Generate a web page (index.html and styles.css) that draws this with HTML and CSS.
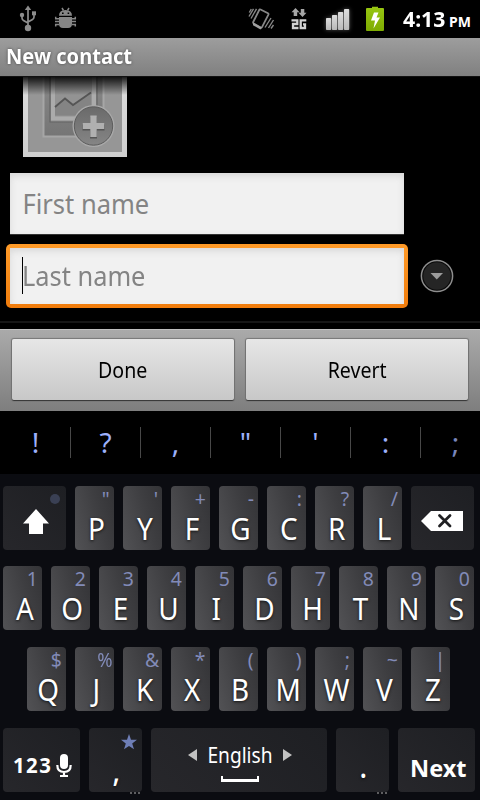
FILE: index.html
```html
<!DOCTYPE html>
<html lang="en">
<head>
<meta charset="utf-8">
<title>New contact</title>
<link rel="stylesheet" href="styles.css">
</head>
<body>
<div class="phone">
  <header class="status">
    <svg class="usb" width="20" height="28" viewBox="18 4 20 28"><g fill="none" stroke="#8c8c8c" stroke-width="1.700"><path d="M28 10v16M22 16v2q0 1.500 1.500 2.400l4.500 2.600M34 14v3q0 1.500-1.500 2.400l-4.500 2.600"/></g><g fill="#8c8c8c"><path d="M28 5.500l3.200 4.500h-6.400z"/><circle cx="22" cy="15" r="2.200"/><path d="M32 11.300h4v4h-4z"/><circle cx="28" cy="28" r="3.200"/></g></svg>
    <svg class="bug" width="24" height="28" viewBox="54 4 24 28"><g fill="#868686"><path d="M59 15.700q0-5.500 6.400-5.700 6.600.2 6.600 5.700zM59 17h13v7q0 4-4 4h-5q-4 0-4-4z"/></g><path d="M62 8l1.500 2.500M69 8l-1.500 2.500M59 18.700h-3.300v-2M59 21.500h-4M59 24.500h-3.300v2M72 18.700h3.300v-2M72 21.500h4M72 24.500h3.300v2" fill="none" stroke="#868686" stroke-width="1.500"/><path d="M62 12.500h1.600v1.600H62zM67.600 12.500h1.600v1.600h-1.600z" fill="#000"/></svg>
    <svg class="vibrate" width="28" height="28" viewBox="247 4 28 28"><g fill="none" stroke="#878787"><path d="M260.500 9.500l7.500 3.800q.8.500.4 1.400l-6.400 12.400q-.5.900-1.400.5l-7-4.200q-.8-.5-.4-1.400l6-12q.4-.9 1.300-.5z" stroke-width="1.800"/><path d="M249 16.500l4.500-7.700M251 18.500l5.500-9.700M249.300 12.500l2-3.500M265 27.500l6-9.500M268.500 28l5-8M271 28.500l2.500-3.500" stroke-width="1.400"/></g><path d="M253 22.500l9 5-1.500 2-7.500-4.300z" fill="#a0a0a0"/></svg>
    <svg class="data" width="18" height="28" viewBox="290 4 18 28"><path d="M295.500 8l4 4.300h-2.300V16h-3.500v-3.700h-2.200zM302.500 17l-4-4.300h2.300V9h3.500v3.700h2.200z" fill="#a6a6a6"/><path d="M291.500 20.300h5.800v3.700h-4.300v4h5.500M306.300 20.300h-5.600V28h4.300v-3.700h-2" fill="none" stroke="#d2d2d2" stroke-width="2.300"/></svg>
    <svg class="signal" width="26" height="28" viewBox="325 4 26 28"><defs><linearGradient id="sg" x1="0" y1="0" x2="0" y2="1"><stop offset="0" stop-color="#ddd"/><stop offset="1" stop-color="#b9b9b9"/></linearGradient></defs><g fill="url(#sg)"><rect x="326" y="18" width="5.200" height="12" rx=".8"/><rect x="332" y="15" width="5.200" height="15" rx=".8"/><rect x="338" y="12" width="5.200" height="18" rx=".8"/><rect x="344" y="9" width="5.200" height="21" rx=".8"/></g></svg>
    <svg class="battery" width="20" height="28" viewBox="365 4 20 28"><defs><linearGradient id="bg" x1="0" y1="0" x2="0" y2="1"><stop offset="0" stop-color="#98c712"/><stop offset="1" stop-color="#7eab02"/></linearGradient></defs><path d="M372 8V6.800h6V8h5q1 0 1 1v21q0 1-1 1h-16q-1 0-1-1V9q0-1 1-1z" fill="url(#bg)"/><path d="M374 12.500h4.500l-2 5h3.500l-6.500 11 1.500-8h-4z" fill="#fff"/></svg>
    <div class="clock"><span class="time">4:13</span><span class="ampm">PM</span></div>
  </header>
  <div class="titlebar"><h1>New contact</h1></div>
  <main class="form">
    <svg class="photo" width="104" height="80" viewBox="23 77 104 80">
      <defs>
        <linearGradient id="fade" x1="0" y1="0" x2="0" y2="1"><stop offset="0" stop-color="#000" stop-opacity=".88"/><stop offset="1" stop-color="#000" stop-opacity="0"/></linearGradient>
        <linearGradient id="frame" x1="0" y1="0" x2="0" y2="1"><stop offset="0" stop-color="#ddd"/><stop offset="1" stop-color="#cfcfcf"/></linearGradient>
        <linearGradient id="card" x1="0" y1="0" x2="0" y2="1"><stop offset="0" stop-color="#8b8b8b"/><stop offset="1" stop-color="#757575"/></linearGradient>
        <linearGradient id="disc" x1="0" y1="0" x2="0" y2="1"><stop offset="0" stop-color="#6a6a6a"/><stop offset="1" stop-color="#858585"/></linearGradient>
      </defs>
      <path d="M23 77h104v80H23z" fill="url(#frame)"/><path d="M28 77h94v75H28z" fill="#969696"/>
      <path d="M43.500 70h60v66.500h-60z" fill="url(#card)" stroke="#a6a6a6" stroke-width="2"/>
      <path d="M50 70h47v52H50z" fill="#8c8c8c" stroke="#646464" stroke-width="1.200"/>
      <path d="M53 70h41v48.500H53z" fill="#939393" stroke="#ababab" stroke-width="4"/>
      <path d="M55 107l10-8.500 8 6.500 18-12.500v23H55z" fill="#848484"/><path d="M55 107l10-8.500 8 6.500 18-12.500" fill="none" stroke="#555" stroke-width="1.800"/>
      <circle cx="93.500" cy="126" r="21" fill="#a9a9a9"/><circle cx="93.500" cy="126" r="19.200" fill="url(#disc)" stroke="#5c5c5c" stroke-width="1"/>
      <path d="M90 117h7v7.500h7.500v6h-7.500v8h-7v-8h-7.500v-6H90z" fill="#555"/><path d="M90.300 115.500h6.400v7.500h7.500v6h-7.500v8h-6.400v-8h-7.500v-6h7.500z" fill="#b0b0b0"/>
      <path d="M23 77h104v18H23z" fill="url(#fade)"/>
    </svg>
    <div class="field"><span>First name</span></div>
    <div class="row">
      <div class="focus"><div class="field inner"><i class="caret"></i><span>Last name</span></div></div>
      <svg class="more" width="34" height="34" viewBox="0 0 34 34"><circle cx="17" cy="17" r="15.600" fill="#090909" stroke="#8e8e8e" stroke-width="1.500"/><circle cx="17" cy="17" r="13.700" fill="#252525"/><path d="M10.500 14h12.500l-6.200 6.500z" fill="#9c9c9c"/></svg>
    </div>
    <div class="rule"></div>
  </main>
  <div class="actions"><div class="button"><span>Done</span></div><div class="button"><span>Revert</span></div></div>
  <div class="suggest"><span>!</span><span>?</span><span>,</span><span>"</span><span>'</span><span>:</span><span class="dim">;</span></div>
  <div class="keyboard">
    <div class="keys">
      <div class="key dark shift"><svg width="63" height="64"><circle cx="52" cy="13" r="5" fill="#3a4054"/><path d="M33 23l13 14.500h-6V48H26V37.500h-6z" fill="#fff"/></svg></div>
      <div class="key"><small>"</small><b>P</b></div><div class="key"><small>'</small><b>Y</b></div><div class="key"><small>+</small><b>F</b></div><div class="key"><small>-</small><b>G</b></div><div class="key"><small>:</small><b>C</b></div><div class="key"><small>?</small><b>R</b></div><div class="key"><small>/</small><b>L</b></div>
      <div class="key dark shift"><svg width="63" height="64"><path d="M10 35l10-10h32v20H20z" fill="#fff"/><path d="M28.500 29.500l10.500 10.500M39 29.500L28.500 40" stroke="#202023" stroke-width="2.800" stroke-linecap="round"/></svg></div>
    </div>
    <div class="keys">
      <div class="key"><small>1</small><b>A</b></div><div class="key"><small>2</small><b>O</b></div><div class="key"><small>3</small><b>E</b></div><div class="key"><small>4</small><b>U</b></div><div class="key"><small>5</small><b>I</b></div><div class="key"><small>6</small><b>D</b></div><div class="key"><small>7</small><b>H</b></div><div class="key"><small>8</small><b>T</b></div><div class="key"><small>9</small><b>N</b></div><div class="key"><small>0</small><b>S</b></div>
    </div>
    <div class="keys third">
      <div class="key"><small>$</small><b>Q</b></div><div class="key"><small class="wide">%</small><b>J</b></div><div class="key"><small class="amp">&amp;</small><b>K</b></div><div class="key"><small>*</small><b>X</b></div><div class="key"><small>(</small><b>B</b></div><div class="key"><small>)</small><b>M</b></div><div class="key"><small>;</small><b>W</b></div><div class="key"><small>~</small><b>V</b></div><div class="key"><small>|</small><b>Z</b></div>
    </div>
    <div class="keys fourth">
      <div class="key dark symbols"><span>123</span><svg width="16" height="24" viewBox="0 0 16 24"><rect x="4" y="0" width="8" height="15" rx="4" fill="#fff"/><path d="M1.300 11q0 7 6.700 7t6.700-7M8 18v4M4 22h8" fill="none" stroke="#fff" stroke-width="2.200"/></svg></div>
      <div class="key dark mark"><svg class="star" width="16" height="16" viewBox="0 0 16 16"><path d="M8 0l2 5.700 6 .1-4.800 3.700L13 15.300 8 11.900l-5 3.400 1.800-5.800L0 5.800l6-.1z" fill="#6e7eb6"/></svg><b>,</b><i class="dots"></i></div>
      <div class="key dark space"><div class="lang"><i class="left"></i><span>English</span><i class="right"></i></div><div class="bar"></div></div>
      <div class="key dark mark period"><b>.</b><i class="dots"></i></div>
      <div class="key dark next"><span>Next</span></div>
    </div>
  </div>
</div>
</body>
</html>
```
FILE: styles.css
```css
* { box-sizing: border-box; }
body { margin: 0; background: #000; }
.phone { width: 480px; height: 800px; overflow: hidden; background: #000; font-family: "Noto Sans", "Open Sans", sans-serif; display: flex; flex-direction: column; }
svg { display: block; flex: none; }
span, b { white-space: nowrap; }
.status { height: 38px; display: flex; align-items: flex-start; padding: 4px 0 0 18px; flex: none; }
.bug { margin-left: 16px; }
.vibrate { margin-left: 169px; }
.data { margin-left: 15px; }
.signal { margin-left: 17px; filter: drop-shadow(0 0 2px #555); }
.battery { margin-left: 14px; }
.clock { margin-left: 18px; color: #fff; font-weight: 700; display: flex; align-items: baseline; line-height: 31px; }
.time { font-size: 21px; width: 46px; transform: scaleX(1.01); transform-origin: left; }
.ampm { font-size: 14px; }
.titlebar { height: 38px; flex: none; background: linear-gradient(#9d9d9d, #808080); padding-left: 6px; }
h1 { margin: 0; color: #fff; font-size: 21px; line-height: 36px; font-weight: 700; text-shadow: 0 0 3px #444; transform: scaleX(.955); transform-origin: left; }
.form { height: 253px; flex: none; padding-top: 1px; border-top: 1px solid #111; }
.photo { margin: -1px 0 0 23px; }
.field { width: 394px; height: 61px; margin: 16px 0 0 10px; padding-left: 12px; background: #f1f1f1; box-shadow: inset 0 3px 7px #d8d8d8, 0 1px #333; color: #848484; font-size: 27px; line-height: 61px; display: flex; }
.field span { transform: translateX(.5px) scaleX(.945); transform-origin: left; }
.row { display: flex; align-items: center; margin: 10px 0 0 6px; }
.focus { width: 402px; height: 64px; padding: 4px; border-radius: 5px; background: linear-gradient(#ff9b28, #f07c0c); }
.inner { height: 56px; margin: 0; line-height: 55px; position: relative; box-shadow: inset 0 3px 7px #d8d8d8; }
.inner span { transform: scaleX(.94); }
.caret { position: absolute; left: 12px; top: 9px; width: 1px; height: 37px; background: #000; }
.more { margin-left: 12px; }
.rule { height: 2px; margin-top: 13px; background: #171717; }
.actions { height: 82px; flex: none; border-top: 1px solid #c0c0c0; background: linear-gradient(#aaa, #7e7e7e); padding: 9px 12px 0; display: flex; gap: 12px; }
.button { width: 222px; height: 61px; border-radius: 2px; background: linear-gradient(#e6e6e6, #c8c8c8); box-shadow: 0 1px 1px #333, 0 0 1px 1px #777; text-align: center; font-size: 22px; line-height: 60px; color: #000; }
.button span { display: inline-block; transform: scaleX(.89); }
.suggest { height: 63px; flex: none; display: flex; color: #9db0fb; font-size: 28px; line-height: 63px; text-align: center; }
.suggest span { width: 70px; flex: none; padding-left: 1px; }
.suggest span + span { background: linear-gradient(#484848, #484848) 0 16px / 1px 31px no-repeat; }
.suggest .dim { color: #7986bc; }
.keyboard { height: 326px; flex: none; background: #0b0c11; padding: 12px 3px 0; }
.keys { height: 64px; margin-bottom: 16px; display: flex; gap: 9px; }
.third { padding-left: 24px; margin-top: 17px; }
.fourth { margin-top: 17px; }
.key { width: 39px; height: 64px; flex: none; border-radius: 4px; background: linear-gradient(75deg, #525255, #3e3e41 60%, #333336); display: flex; flex-direction: column; align-items: center; }
.key small { align-self: flex-end; margin-right: 4px; font-size: 20px; line-height: 25px; height: 24px; color: #828bb8; transform: translateX(-.5px) scaleX(.97); transform-origin: right; }
.key .wide { margin-right: 1px; transform: scaleX(.92); }
.key .amp { margin-right: 2px; }
.key b { font-size: 31px; line-height: 36px; font-weight: 400; color: #fff; text-shadow: 0 1px 3px #111; transform: translateX(2px) scaleX(.9); }
.key.dark { background: linear-gradient(45deg, #27272b, #1e1f23); }
.shift { width: 63px; }
.symbols { width: 77px; flex-direction: row; padding: 11px 0 0 10px; color: #fff; font-size: 21px; font-weight: 700; letter-spacing: 1.5px; }
.symbols span { transform: translateY(-1px) scaleX(.97); transform-origin: left; width: 43px; }
.symbols svg { margin-top: 1px; }
.mark { width: 53px; position: relative; justify-content: flex-end; }
.star { position: absolute; left: 32px; top: 6px; }
.key.mark b { margin-bottom: 2px; font-weight: 500; line-height: 40px; transform: translateX(1px) scaleX(.9); }
.key.period b { margin-bottom: 6px; }
.dots { position: absolute; left: 41px; bottom: -2px; width: 10px; height: 2px; background: repeating-linear-gradient(90deg, #5e5e60 0 2px, transparent 2px 4px); }
.space { width: 176px; }
.lang { display: flex; align-items: center; justify-content: center; color: #fff; font-size: 22px; line-height: 54px; height: 48px; padding-top: 6px; margin-left: 2px; }
.lang span { width: 78px; transform: translateY(-1px) scaleX(.87); margin: 0 4px; text-align: center; }
.left, .right { border: 6px solid transparent; border-width: 6px 0; }
.left { border-right: 9px solid #c2c2c2; }
.right { border-left: 9px solid #c2c2c2; }
.bar { width: 38px; height: 6px; margin-left: 2px; border: 2px solid #fff; border-width: 0 2px 3px; }
.next { width: 77px; color: #fff; font-size: 24px; line-height: 80px; font-weight: 700; }
.next span { transform: translateX(1.5px) scaleX(.98); }
```
